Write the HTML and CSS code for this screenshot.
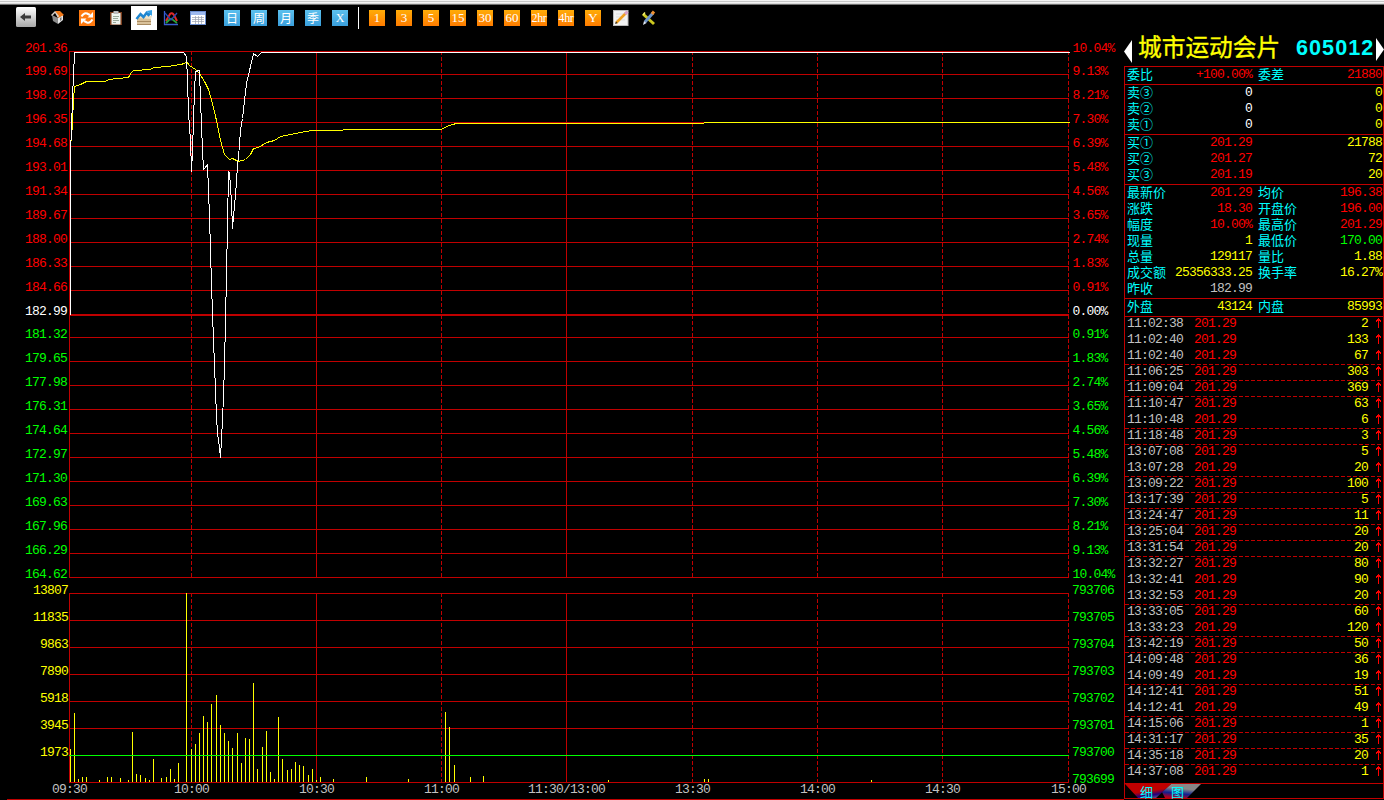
FILE: index.html
```html
<!DOCTYPE html>
<html lang="zh-CN">
<head>
<meta charset="utf-8">
<title>城市运动会片 605012</title>
<link rel="stylesheet" href="styles.css">
</head>
<body>
<div class="window-edge"></div>
<header class="toolbar">
  <svg class="ic-back" width="20" height="20" viewBox="0 0 20 20"><defs><linearGradient id="gb" x1="0" y1="0" x2="0" y2="1"><stop offset="0" stop-color="#fff"/><stop offset="1" stop-color="#a8a8a8"/></linearGradient></defs><rect width="20" height="20" rx="1.5" fill="url(#gb)"/><path d="M4 10l5-4v2.500h6v3H9V14z" fill="#3a3a3a"/></svg>
  <svg class="ic-home" width="16" height="16" viewBox="0 0 16 16"><path d="M2 6l6 3v6l-5-3z" fill="#8a8a8a"/><path d="M8 9l5-4v6l-5 4z" fill="#e8e8e8"/><path d="M5 2l5 0 4 4-6 3z" fill="#f07818"/><path d="M5 2L1 6l1 1 3-3 3 5 1-2z" fill="#d8d0c8"/><path d="M10 9l1.500-1v3L10 12z" fill="#777"/></svg>
  <svg class="ic-refresh" width="16" height="16" viewBox="0 0 16 16"><rect width="16" height="16" fill="#ff7a10"/><path d="M2.500 6.500Q5 2.500 8 3.500l3 1.500M13.500 9.500Q11 13.500 8 12.500L5 11" fill="none" stroke="#fff" stroke-width="2"/><path d="M14 2v5.500H8.500zM2 14V8.500h5.500z" fill="#fff"/></svg>
  <svg class="ic-clip" width="16" height="16" viewBox="0 0 16 16"><rect x="2" y="2" width="12" height="13" fill="#7a3d1c"/><rect x="3.500" y="3" width="9" height="11.500" fill="#eef4ee"/><rect x="5.500" y="1" width="5" height="3" fill="#bbb"/><path d="M5 6.500h6M5 8.500h5M5 10.500h6M5 12.500h3" stroke="#9aaa9a"/></svg>
  <span class="active-tool"><svg width="18" height="18" viewBox="0 0 18 18"><path d="M2 9h14v7H2z" fill="#d9c19a"/><path d="M2 12.500h14M2 15.500h14" stroke="#a88a60"/><path d="M2 9l2-2h13l-1 3z" fill="#efe2c8"/><path d="M1.500 10l4-5 3 3 3-4 2 2 2-2" fill="none" stroke="#1f86d0" stroke-width="2.500"/><path d="M11.500 2L17 1v6z" fill="#35a2e8"/></svg></span>
  <svg class="ic-ind" width="16" height="16" viewBox="0 0 16 16"><path d="M1.500 1v13.500h13.500" fill="none" stroke="#3a5fd0" stroke-width="1.300"/><path d="M3 11l4-7q2-2 4 1l3 6" fill="none" stroke="#e02828" stroke-width="2"/><path d="M3 13l4-4q2-1 3 1l4 3" fill="none" stroke="#28a038" stroke-width="1.800"/><path d="M2 3l6 7 6-7" fill="none" stroke="#2848b8" stroke-width="1.200"/></svg>
  <svg class="ic-table" width="16" height="16" viewBox="0 0 16 16"><rect x=".5" y="1.500" width="15" height="13" fill="#fff" stroke="#6c8fd0"/><rect x="1" y="2" width="14" height="3" fill="#9db9ee"/><path d="M2 7.500h12M2 9.500h12M2 11.500h12M5.500 6v8M8.500 6v8M11.500 6v8" stroke="#9aa0b0" stroke-width=".7"/></svg>
  <div class="periods cycle"><b>日</b><b>周</b><b>月</b><b>季</b><b class="latin">X</b></div>
  <i class="divider"></i>
  <div class="periods minutes"><b>1</b><b>3</b><b>5</b><b>15</b><b>30</b><b>60</b><b class="wide">2hr</b><b class="wide">4hr</b><b>Y</b></div>
  <svg class="ic-note" width="16" height="16" viewBox="0 0 16 16"><rect x=".5" y=".5" width="14.500" height="15" fill="#f2f2f2" stroke="#bbb"/><path d="M3 4h8M3 7h6M3 10h9" stroke="#ddd"/><path d="M3 13L13 3" stroke="#efa020" stroke-width="2.500"/><path d="M12 4l2.500-2.500" stroke="#d8a0c8" stroke-width="3"/><path d="M2 14l1-2.500L4.500 13z" fill="#222"/></svg>
  <svg class="ic-tool" width="16" height="16" viewBox="0 0 16 16"><path d="M2 4l11 10" stroke="#ccc820" stroke-width="3"/><path d="M4 2.500L2 5" stroke="#f2ee70" stroke-width="1.500"/><path d="M4 12l8-9" stroke="#6e94c8" stroke-width="3"/><path d="M2 15l1-4 2.500 2z" fill="#dfe8f4"/><path d="M11 4l2-2.500" stroke="#f09030" stroke-width="3"/></svg>
</header>
<main class="workspace">
  <svg id="chart" class="chart" viewBox="0 31 1124 769" width="1124" height="769"></svg>
  <aside class="quote">
    <div class="stock">
      <svg width="8" height="23" viewBox="0 0 8 23"><path d="M8 0v23L0 11.500z" fill="#fff"/></svg>
      <span class="name">城市运动会片</span><span class="code">605012</span>
      <svg class="next" width="8" height="23" viewBox="0 0 8 23"><path d="M0 0v23l8-11.500z" fill="#fff"/></svg>
    </div>
    <div class="panel">
      <div id="stats"></div>
      <div id="ticks" class="ticks"></div>
      <div class="tabs">
        <svg width="80" height="14" viewBox="0 0 80 14">
          <defs>
            <linearGradient id="t1" x1="0" y1="0" x2=".6" y2="1.200"><stop offset=".5" stop-color="#c00000"/><stop offset=".72" stop-color="#200080"/><stop offset="1" stop-color="#888"/></linearGradient>
            <linearGradient id="t2" x1=".7" y1="0" x2=".4" y2="1"><stop offset=".35" stop-color="#888"/><stop offset=".7" stop-color="#102090"/><stop offset="1" stop-color="#b00020"/></linearGradient>
          </defs>
          <path d="M46 0h30L62 14H40l-3-6z" fill="url(#t2)"/><path d="M0 0h46L31 14H13z" fill="url(#t1)"/>
          <text x="15" y="12.500">细</text><text x="46" y="12.500">图</text>
        </svg>
      </div>
    </div>
  </aside>
</main>
<script src="app.js"></script>
</body>
</html>
```
FILE: styles.css
```css
* { box-sizing: border-box; }
body {
  margin: 0;
  width: 1384px;
  height: 800px;
  overflow: hidden;
  background: #000;
  display: flex;
  flex-direction: column;
  font-family: "Liberation Mono", "Noto Sans CJK SC", monospace;
}
.window-edge {
  height: 5px;
  background: linear-gradient(#f4f4f4 1px, #c8c8c8 1px 2px, #f4f4f4 2px 3px, #d8d8d8 3px 4px, #707070 4px);
}
.toolbar { height: 26px; display: flex; align-items: center; padding-left: 16px; }
.toolbar > svg { flex: none; }
.ic-back { margin-top: -2px; }
.ic-home { margin-left: 14px; margin-top: -3px; }
.ic-refresh, .ic-clip { margin-left: 13px; }
.active-tool {
  width: 26px;
  height: 24px;
  margin-left: 7px;
  background: #fff;
  display: flex;
  align-items: center;
  justify-content: center;
}
.ic-ind { margin-left: 6px; }
.ic-table { margin-left: 11px; }
.periods { display: flex; gap: 11px; }
.periods b {
  width: 16px;
  height: 16px;
  display: flex;
  align-items: center;
  justify-content: center;
  color: #fff;
  font-weight: 400;
  white-space: nowrap;
}
.cycle { margin-left: 18px; }
.cycle b { background: linear-gradient(#5cc0ee, #3a9fdc); font-size: 12px; line-height: 16px; font-family: "Noto Sans CJK SC", sans-serif; }
.cycle .latin { font-family: "Liberation Serif", serif; }
.divider { width: 1px; height: 22px; margin: 0 10px; background: #fff; }
.minutes b { background: linear-gradient(#ffac08, #ff7c00); font: 13px/16px "Liberation Serif", serif; }
.minutes .wide { font-size: 12px; letter-spacing: -0.4px; }
.ic-note, .ic-tool { margin-left: 12px; }

.workspace { display: flex; height: 769px; }
.chart { flex: none; display: block; }
.chart text { font-size: 13px; letter-spacing: -0.8px; white-space: pre; }
.grid { stroke: #c00000; fill: none; shape-rendering: crispEdges; }
.dash { stroke-dasharray: 4 2; }
.volume { stroke: #ff0; shape-rendering: crispEdges; }
.base { stroke: #0f0; shape-rendering: crispEdges; }
.price { stroke: #fff; fill: none; shape-rendering: crispEdges; }
.average { stroke: #ff0; fill: none; shape-rendering: crispEdges; }

.quote { width: 260px; display: flex; flex-direction: column; }
.stock { height: 35px; display: flex; align-items: center; position: relative; }
.stock svg { flex: none; margin-top: 5px; }
.name {
  width: 157px;
  margin-left: 6px;
  margin-top: -5px;
  color: #ff0;
  font: 23.7px/30px "Noto Sans CJK SC", sans-serif;
  -webkit-text-stroke: 0.35px #ff0;
}
.code { color: #0ff; font: bold 21.6px/32px "Liberation Sans", sans-serif; letter-spacing: 1.05px; margin-left: 1px; margin-top: -1px; }
.stock .next { position: absolute; right: 0; top: 2px; }
.panel {
  flex: 1;
  display: flex;
  flex-direction: column;
  border-left: 1px solid #c00000;
  border-right: 1px solid #c00000;
  margin-bottom: 1px;
  font-size: 13px;
}
.section { border-top: 1px solid #c00000; padding-bottom: 1px; }
.row { display: grid; grid-template-columns: 48px 79px 6px 50px 74px; height: 16px; line-height: 16px; }
.row span { white-space: nowrap; letter-spacing: -0.8px; }
.row .label { font: 13px/16px "Noto Sans CJK SC", sans-serif; color: #0ff; letter-spacing: 0; padding-left: 2px; margin-top: -1px; }
.row .num { display: flex; justify-content: flex-end; }
.row .second { grid-column: 4; padding-left: 0; }
.row .last { grid-column: 5; }
.ticks { border-top: 1px solid #c00000; height: 467px; }
.tick {
  display: grid;
  grid-template-columns: 67px 1fr 70px 15px;
  height: 16px;
  padding-top: 1px;
  line-height: 13px;
  letter-spacing: -0.8px;
  padding-left: 2px;
}
.tick:first-child { height: 15px; padding-top: 0; }
.tick.minute { background: repeating-linear-gradient(90deg, #c00000 0 4px, #000 4px 6px) 0 0 / 100% 1px no-repeat; }
.tick .amount { display: flex; justify-content: flex-end; }
.tick svg { margin: 1px 0 0 8px; }
.red { color: #f00; fill: #f00; }
.green { color: #0f0; fill: #0f0; }
.yellow { color: #ff0; fill: #ff0; }
.white { color: #fff; fill: #fff; }
.gray { color: #c0c0c0; fill: #c0c0c0; }
.tabs { height: 16px; border-top: 1px solid #c00000; border-bottom: 1px solid #c00000; }
.tabs svg { display: block; overflow: visible; }
.tabs text { font: 13px "Noto Sans CJK SC", sans-serif; fill: #0ff; }
```
FILE: app.js
```js
const parts = [];
const hline = (y, cls = "grid", w = 1) =>
  parts.push(`<path class="${cls}" stroke-width="${w}" d="M69 ${y + w / 2}H1069"/>`);
const label = (x, y, s, cls, anchor = "start") => {
  const start = anchor === "end" ? x - s.length * 7 : anchor === "middle" ? x - s.length * 3.5 : x;
  parts.push(`<text class="${cls}" x="${start}" y="${y}">${s}</text>`);
};

// Price grid and scales
const prices = ["201.36","199.69","198.02","196.35","194.68","193.01","191.34","189.67","188.00","186.33","184.66","182.99","181.32","179.65","177.98","176.31","174.64","172.97","171.30","169.63","167.96","166.29","164.62"];
const percents = ["10.04%","9.13%","8.21%","7.30%","6.39%","5.48%","4.56%","3.65%","2.74%","1.83%","0.91%","0.00%","0.91%","1.83%","2.74%","3.65%","4.56%","5.48%","6.39%","7.30%","8.21%","9.13%","10.04%"];
prices.forEach((p, i) => {
  const y = i === 0 ? 51 : i < 12 ? 50 + 24 * i : 49 + 24 * i;
  const cls = i < 11 ? "red" : i === 11 ? "white" : "green";
  hline(y, "grid", i === 11 ? 2 : 1);
  label(67, y + 1, p, cls, "end");
  label(1072.5, y + 1, percents[i], cls);
});

// Volume grid and scales
["13807","11835","9863","7890","5918","3945","1973",""].forEach((v, i) => {
  const y = 593 + 27 * i;
  if (i !== 6) hline(y);
  label(68, y + 1, v, "yellow", "end");
  label(1072, y + 1, String(793706 - i), "green");
});

// Time axis
[[69,"09:30"],[191,"10:00"],[316,"10:30"],[441,"11:00"],[566,"11:30/13:00"],[692,"13:30"],[817,"14:00"],[942,"14:30"],[1068,"15:00"]].forEach(([x, t]) => {
  const solid = x === 69 || x === 316 || x === 566;
  parts.push(`<path class="grid ${solid ? "" : "dash"}" d="M${x + .5} 51V578M${x + .5} 593V783"/>`);
  label(x + .5, 793, t, "gray", "middle");
});

const bars = "70:749 74:713 78:779 82:777 86:777 99:780 107:777 111:777 120:778 128:780 132:732 136:774 140:775 145:778 149:780 153:759 161:778 166:777 170:769 174:779 178:763 186:593 191:749 195:744 199:733 203:716 207:722 211:704 216:695 220:725 224:733 228:741 232:748 237:733 241:763 245:738 249:739 253:683 257:769 262:747 266:731 270:772 274:779 278:717 282:759 287:770 291:769 295:762 299:765 303:766 308:775 312:769 316:780 320:777 333:779 366:777 408:779 445:712 449:727 454:765 470:777 483:776 608:780 704:779 708:779 871:780";
parts.push(`<path class="volume" d="${bars.split(" ").map(b => { const [x, y] = b.split(":"); return `M${+x + .5} ${y}V782`; }).join("")}"/>`);
hline(755, "base");

const line = (cls, pts) => parts.push(`<polyline class="${cls}" transform="translate(.5 .5)" points="${pts}"/>`);
line("average", "70,231 70,140 71,140 72,120 73,100 74,86 80,84 86,81 105,81 108,79 117,78 128,77 131,72 133,70 150,69 153,67 168,66 180,64 184,63 186,61 189,65 195,69 199,73 204,81 208,89 212,103 216,120 220,140 224,154 229,159 232,158 238,161 245,159 250,154 253,148 258,147 266,142 274,140 280,136 290,134 300,132 312,130 320,130 365,129 441,129 446,126 452,124 456,123 703,123 704,122 1069,122");
line("price", "70,314 70,149 71,130 72,97 73,75 74,52 183,52 186,56 187,80 188,112 190,140 191,171 192,150 194,90 195,71 199,70 200,100 202,150 203,169 204,168 207,164 208,190 209,216 210,250 211,284 212,313 213,339 214,365 215,390 216,416 217,432 218,440 219,447 220,457 222,420 223,395 224,365 225,320 226,275 227,225 228,171 229,173 230,185 231,203 232,228 233,216 234,205 235,195 236,180 237,165 238,157 240,130 242,118 244,100 246,83 250,66 253,53 257,56 261,52 1069,52");
parts.push(`<path class="grid" d="M7 799.5H1124"/>`);
document.getElementById("chart").innerHTML = parts.join("");

// Quote table: label, value, colour, second label, value, colour
const sections = [
  [["委比","+100.00%","red","委差","21880","red"]],
  [["卖③","0","white","","0","yellow"],["卖②","0","white","","0","yellow"],["卖①","0","white","","0","yellow"]],
  [["买①","201.29","red","","21788","yellow"],["买②","201.27","red","","72","yellow"],["买③","201.19","red","","20","yellow"]],
  [["最新价","201.29","red","均价","196.38","red"],["涨跌","18.30","red","开盘价","196.00","red"],["幅度","10.00%","red","最高价","201.29","red"],["现量","1","yellow","最低价","170.00","green"],["总量","129117","yellow","量比","1.88","yellow"],["成交额","25356333.25","yellow","换手率","16.27%","yellow"],["昨收","182.99","gray","","",""]],
  [["外盘","43124","yellow","内盘","85993","yellow"]]
];
document.getElementById("stats").innerHTML = sections.map(s => `<div class="section">${s.map(r =>
  `<div class="row"><span class="label">${r[0]}</span><span class="num ${r[2]}">${r[1]}</span><span class="label second">${r[3]}</span><span class="num last ${r[5]}">${r[4]}</span></div>`).join("")}</div>`).join("");

const trades = "11:02:38 2,11:02:40 133,11:02:40 67,11:06:25 303,11:09:04 369,11:10:47 63,11:10:48 6,11:18:48 3,13:07:08 5,13:07:28 20,13:09:22 100,13:17:39 5,13:24:47 11,13:25:04 20,13:31:54 20,13:32:27 80,13:32:41 90,13:32:53 20,13:33:05 60,13:33:23 120,13:42:19 50,14:09:48 36,14:09:49 19,14:12:41 51,14:12:41 49,14:15:06 1,14:31:17 35,14:35:18 20,14:37:08 1".split(",").map(t => t.split(" "));
document.getElementById("ticks").innerHTML = trades.map(([t, n], i) => {
  const fresh = i > 0 && trades[i - 1][0].slice(0, 5) !== t.slice(0, 5);
  return `<div class="tick ${fresh ? "minute" : ""}"><span class="gray">${t}</span><span class="red">201.29</span><span class="amount yellow">${n}</span><svg width="6" height="11" viewBox="0 0 6 11"><path d="M2 0h1v1h1v1h1v2H4V3H3v7H2V3H1v1H0V2h1V1h1z" fill="#f00" shape-rendering="crispEdges"/></svg></div>`;
}).join("");
```
